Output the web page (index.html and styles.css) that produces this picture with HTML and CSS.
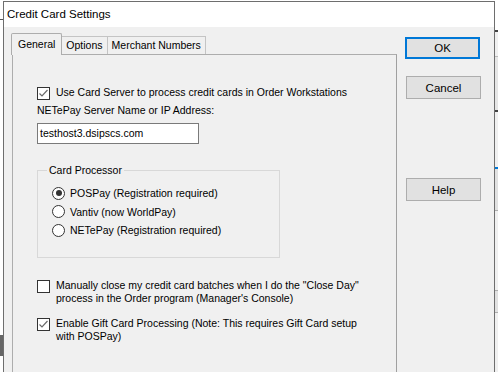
FILE: index.html
```html
<!DOCTYPE html>
<html lang="en">
  <head>
    <meta charset="UTF-8" />
    <title>Credit Card Settings</title>
    <link rel="stylesheet" href="styles.css">
  </head>
  <body>
    <div class="behind-left"></div>
    <div class="dialog">
      <div class="titlebar">Credit Card Settings</div>
      <div class="dialog-body">
        <div class="tabs">
          <div class="tab-row">
            <div class="tab selected">General</div>
            <div class="tab">Options</div>
            <div class="tab">Merchant Numbers</div>
          </div>
          <div class="panel">
            <label class="check first">
              <span class="box checked"><svg width="11" height="11" viewBox="0 0 11 11"><path d="M1.5 5.5 L4 8 L9.5 2" fill="none" stroke="#6b6b6b" stroke-width="1.2"/></svg></span>
              <span>Use Card Server to process credit cards in Order Workstations</span>
            </label>
            <p class="field-label">NETePay Server Name or IP Address:</p>
            <div class="textbox">testhost3.dsipscs.com</div>
            <div class="group">
              <div class="group-title">Card Processor</div>
              <div class="radio on"><span class="circle"></span>POSPay (Registration required)</div>
              <div class="radio"><span class="circle"></span>Vantiv (now WorldPay)</div>
              <div class="radio"><span class="circle"></span>NETePay (Registration required)</div>
            </div>
            <label class="check second">
              <span class="box"></span>
              <span>Manually close my credit card batches when I do the "Close Day"<br>process in the Order program (Manager's Console)</span>
            </label>
            <label class="check third">
              <span class="box checked"><svg width="11" height="11" viewBox="0 0 11 11"><path d="M1.5 5.5 L4 8 L9.5 2" fill="none" stroke="#6b6b6b" stroke-width="1.2"/></svg></span>
              <span>Enable Gift Card Processing (Note: This requires Gift Card setup<br>with POSPay)</span>
            </label>
          </div>
        </div>
        <div class="buttons">
          <button class="btn default">OK</button>
          <button class="btn cancel">Cancel</button>
          <button class="btn help">Help</button>
        </div>
      </div>
    </div>
    <div class="behind-right"></div>
  </body>
</html>
```

FILE: styles.css
```css
html,
body {
  margin: 0;
  width: 498px;
  height: 372px;
  overflow: hidden;
}
body {
  display: flex;
  background: #ffffff;
  font-family: "Liberation Sans", Arial, sans-serif;
  font-size: 10.5px;
  color: #000;
}
.behind-left {
  width: 3px;
  flex: none;
  background:
    linear-gradient(#ffffff 0 19px, #555 19px 20px, #ffffff 20px 335px, #666 335px 356px, #ffffff 356px);
}
.behind-right {
  width: 3px;
  flex: none;
  background:
    linear-gradient(#ffffff 0 30px, #444 30px 32px, #f0f0f0 32px 56px, #bbb 56px 57px, #e6e6e6 57px 110px, #444 110px 112px, #f0f0f0 112px 167px, #0078d7 167px 169px, #e1e1e1 169px 210px, #adadad 210px 211px, #f0f0f0 211px 290px, #adadad 290px 291px, #e1e1e1 291px 312px, #adadad 312px 313px, #f0f0f0 313px);
}
.dialog {
  width: 490px;
  height: 371px;
  flex: none;
  margin-top: 1px;
  border: 1px solid #6e6e6e;
  border-bottom: none;
  background: #f0f0f0;
}
.titlebar {
  height: 25px;
  line-height: 25px;
  padding-left: 3px;
  background: #fff;
  font-size: 11.5px;
}
.dialog-body {
  display: flex;
  padding: 6px 0 0 8px;
}
.tabs {
  width: 385px;
  flex: none;
}
.tab-row {
  display: flex;
  align-items: flex-end;
  height: 21px;
  padding-left: 1px;
}
.tab {
  height: 17px;
  line-height: 17px;
  padding: 0 4px;
  border: 1px solid #c4c4c4;
  border-bottom: none;
  background: #f0f0f0;
  margin-left: -1px;
  position: relative;
}
.tab.selected {
  height: 21px;
  line-height: 21px;
  padding: 0 6px 0 6px;
  margin-left: -2px;
  margin-bottom: -1px;
  border-color: #adadad;
  border-radius: 2px 2px 0 0;
  z-index: 1;
}
.panel {
  height: 290px;
  border: 1px solid #adadad;
  border-right-color: #a0a0a0;
  padding: 31px 0 0 24px;
}
.check {
  display: flex;
  align-items: flex-start;
  line-height: 13px;
}
.box {
  width: 11px;
  height: 11px;
  flex: none;
  margin: 1px 6px 0 0;
  border: 1px solid #333;
  background: #fff;
}
.box svg {
  display: block;
}
.field-label {
  margin: 4px 0 0;
  line-height: 13px;
}
.textbox {
  width: 158px;
  height: 19px;
  line-height: 19px;
  margin-top: 6px;
  padding-left: 2px;
  border: 1px solid #7a7a7a;
  background: #fff;
}
.group {
  width: 241px;
  height: 86px;
  margin-top: 26px;
  border: 1px solid #d8d8d8;
}
.group-title {
  display: table;
  margin: -7px 0 0 9px;
  padding: 0 2px;
  line-height: 13px;
  background: #f0f0f0;
}
.radio {
  display: flex;
  align-items: center;
  height: 18.5px;
  padding-left: 14px;
}
.group-title + .radio {
  margin-top: 7px;
}
.circle {
  width: 11px;
  height: 11px;
  margin-right: 5px;
  border: 1px solid #333;
  border-radius: 50%;
  background: #fff;
  display: flex;
  align-items: center;
  justify-content: center;
}
.radio.on .circle::after {
  content: "";
  width: 6px;
  height: 6px;
  border-radius: 50%;
  background: #333;
}
.check.second {
  margin-top: 21px;
}
.check.third {
  margin-top: 12px;
}
.buttons {
  display: flex;
  flex-direction: column;
  padding: 4px 0 0 9px;
}
.btn {
  width: 75px;
  height: 23px;
  padding: 0;
  border: 1px solid #adadad;
  background: #e1e1e1;
  font-family: "Liberation Sans", Arial, sans-serif;
  font-size: 11.5px;
  color: #000;
}
.btn.default {
  height: 22px;
  margin-left: -1px;
  border: 2px solid #0078d7;
}
.btn.cancel {
  margin-top: 17px;
}
.btn.help {
  margin-top: 79px;
}
```
